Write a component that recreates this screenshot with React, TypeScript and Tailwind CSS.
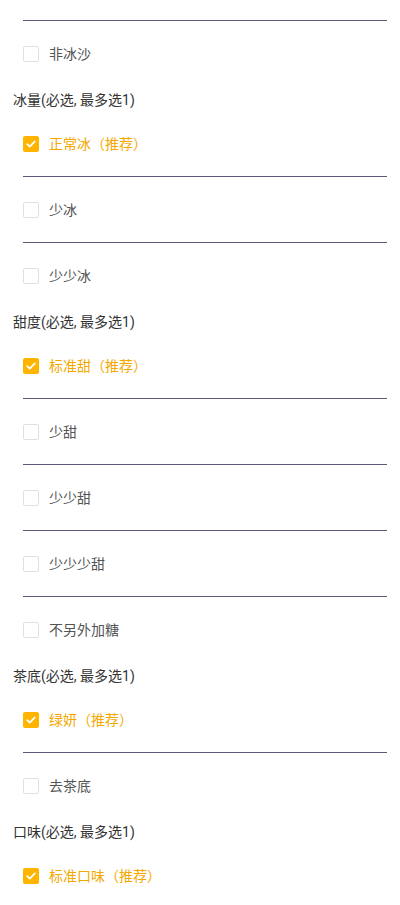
import React from "react";

type Group = { title?: string; items: { label: string; checked?: boolean }[] };

const groups: Group[] = [
  { items: [{ label: "非冰沙" }] },
  {
    title: "冰量(必选, 最多选1)",
    items: [{ label: "正常冰（推荐）", checked: true }, { label: "少冰" }, { label: "少少冰" }],
  },
  {
    title: "甜度(必选, 最多选1)",
    items: [
      { label: "标准甜（推荐）", checked: true },
      { label: "少甜" },
      { label: "少少甜" },
      { label: "少少少甜" },
      { label: "不另外加糖" },
    ],
  },
  {
    title: "茶底(必选, 最多选1)",
    items: [{ label: "绿妍（推荐）", checked: true }, { label: "去茶底" }],
  },
  {
    title: "口味(必选, 最多选1)",
    items: [{ label: "标准口味（推荐）", checked: true }],
  },
];

function Box({ checked }: { checked?: boolean }) {
  if (checked) {
    return (
      <div className="w-4 h-4 rounded-[2px] bg-[#ffb400] flex items-center justify-center shrink-0">
        <svg width="10" height="8" viewBox="0 0 10 8" fill="none">
          <path d="M1.2 4.2L3.8 6.6L8.8 1.4" stroke="white" strokeWidth="1.8" strokeLinecap="round" strokeLinejoin="round" />
        </svg>
      </div>
    );
  }
  return <div className="w-4 h-4 rounded-[2px] border border-[#e0e0e0] bg-white shrink-0" />;
}

export default function App() {
  return (
    <div
      className="w-[400px] h-[905px] overflow-hidden bg-white"
      style={{ fontFamily: 'Roboto, "Noto Sans CJK SC", sans-serif' }}
    >
      {/* tail of previous option */}
      <div className="ml-[23px] mr-[13px] h-[21px] border-b border-[#5c5c7a]" />
      {groups.map((g, gi) => (
        <div key={gi}>
          {g.title && (
            <div className="h-[25px] pt-[4px] pl-[13px] text-[14px] leading-5 text-[#333]">{g.title}</div>
          )}
          <div className="ml-[23px] mr-[13px]">
            {g.items.map((it, i) => {
              const last = i === g.items.length - 1;
              return (
                <div
                  key={i}
                  className={`flex items-center gap-[10px] ${last ? "h-[65px]" : "h-[66px] border-b border-[#5c5c7a]"}`}
                >
                  <Box checked={it.checked} />
                  <span className={`text-[14px] leading-5 ${it.checked ? "text-[#f5a800]" : "text-[#555]"}`}>
                    {it.label}
                  </span>
                </div>
              );
            })}
          </div>
        </div>
      ))}
    </div>
  );
}
